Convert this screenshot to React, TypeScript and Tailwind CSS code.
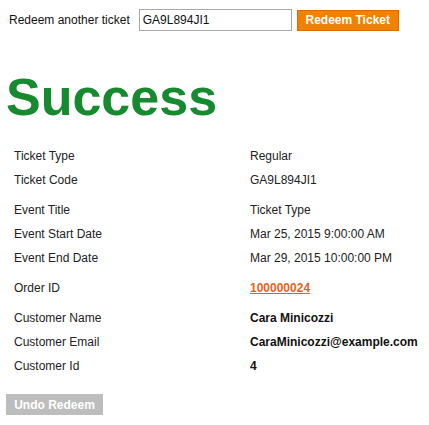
const ticketRows = [
  [
    { label: "Ticket Type", value: "Regular" },
    { label: "Ticket Code", value: "GA9L894JI1" },
  ],
  [
    { label: "Event Title", value: "Ticket Type" },
    { label: "Event Start Date", value: "Mar 25, 2015 9:00:00 AM" },
    { label: "Event End Date", value: "Mar 29, 2015 10:00:00 PM" },
  ],
];

const customerRows = [
  { label: "Customer Name", value: "Cara Minicozzi" },
  { label: "Customer Email", value: "CaraMinicozzi@example.com" },
  { label: "Customer Id", value: "4" },
];

function Row({ label, children }: { label: string; children: React.ReactNode }) {
  return (
    <div className="flex h-6 items-center leading-6">
      <div className="w-[244px] shrink-0 pl-2">{label}</div>
      <div className="whitespace-nowrap">{children}</div>
    </div>
  );
}

export default function App() {
  return (
    <div
      className="w-[429px] h-[425px] overflow-hidden bg-white text-[12px] text-[#222]"
      style={{ fontFamily: '"Liberation Sans", Arial, sans-serif' }}
    >
      <div className="flex items-center pl-[9px] pt-[9px]">
        <span className="text-[#111]">Redeem another ticket</span>
        <input
          className="ml-[9px] h-[22px] w-[153px] border border-[#a9a9a9] px-[3px] text-[12px] text-[#111] outline-none"
          defaultValue="GA9L894JI1"
        />
        <button className="ml-[5px] h-[21px] w-[102px] border border-[#e06a00] bg-[#f18200] text-[12px] font-bold text-white">
          Redeem Ticket
        </button>
      </div>

      <h1 className="mt-[40px] pl-[6px] text-[52px] font-bold leading-[52px] text-[#168a2e]">
        Success
      </h1>

      <div className="mt-[21px] px-[6px]">
        {ticketRows.map((group, i) => (
          <div key={i} className="mb-[6px]">
            {group.map((r) => (
              <Row key={r.label} label={r.label}>
                {r.value}
              </Row>
            ))}
          </div>
        ))}
        <div className="mb-[6px]">
          <Row label="Order ID">
            <a href="#" className="font-bold text-[#e9621a] underline">
              100000024
            </a>
          </Row>
        </div>
        <div>
          {customerRows.map((r) => (
            <Row key={r.label} label={r.label}>
              <span className="font-bold text-[#111]">{r.value}</span>
            </Row>
          ))}
        </div>
        <button className="mt-[16px] h-[21px] w-[97px] bg-[#bdbdbd] text-[12px] font-bold text-white">
          Undo Redeem
        </button>
      </div>
    </div>
  );
}
